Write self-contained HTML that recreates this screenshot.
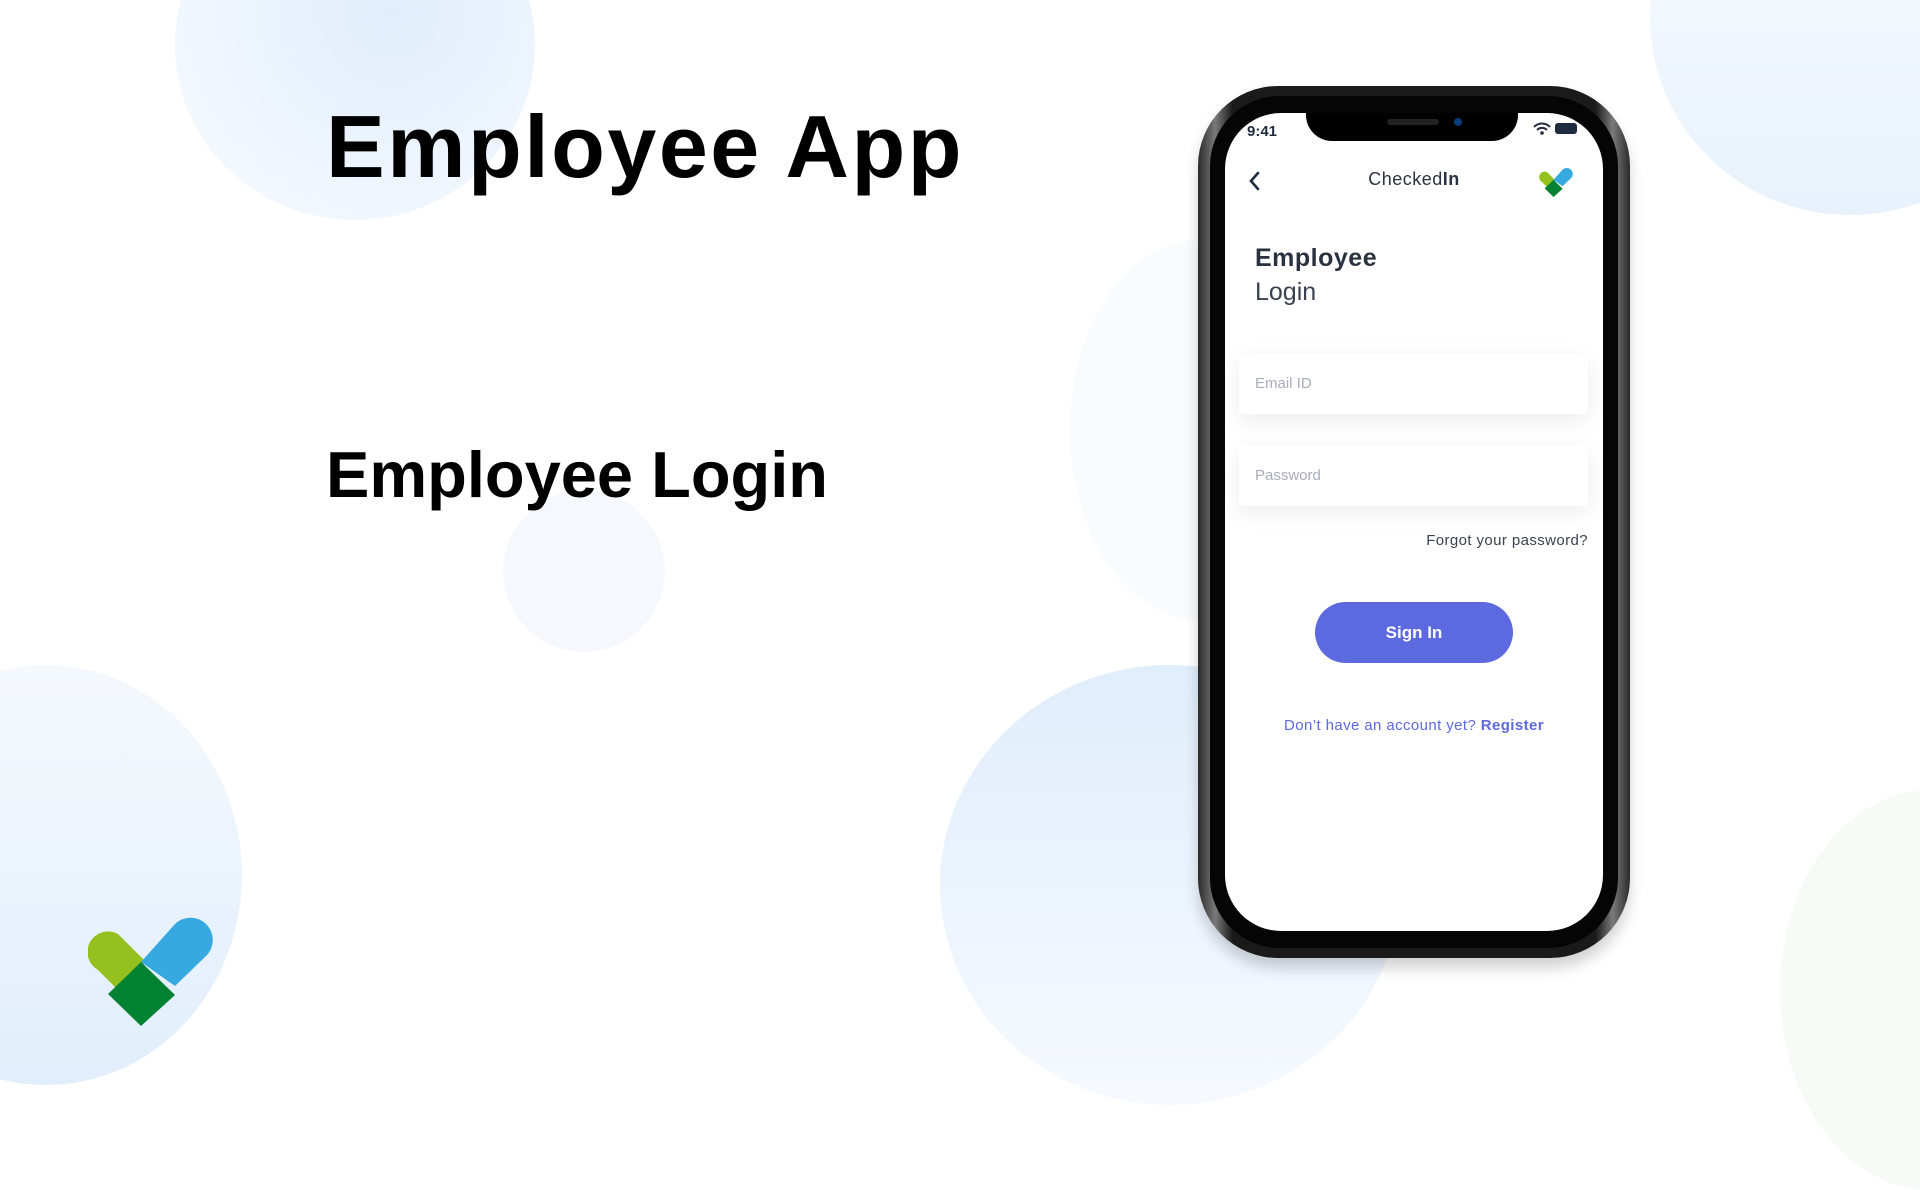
<!DOCTYPE html>
<html><head><meta charset="utf-8"><style>
*{margin:0;padding:0;box-sizing:border-box}
body{width:1920px;height:1080px;overflow:hidden;background:#fff;position:relative;font-family:"Liberation Sans",sans-serif}
.c{position:absolute;border-radius:50%}
.t{position:absolute;white-space:nowrap}
</style></head><body>
<div class="c" style="left:175px;top:-130px;width:360px;height:350px;background:radial-gradient(circle at 60% 40%,#e1edfb,#f1f7fe 70%,#fbfdff)"></div>
<div class="c" style="left:-150px;top:665px;width:392px;height:420px;background:linear-gradient(180deg,#f5f9fd,#e1eefb)"></div>
<div class="c" style="left:503px;top:490px;width:162px;height:162px;background:#f5f9fe"></div>
<div class="c" style="left:940px;top:665px;width:460px;height:440px;background:linear-gradient(180deg,#e0edfb,#f6faff)"></div>
<div class="c" style="left:1070px;top:240px;width:260px;height:380px;background:#fafbfc"></div>
<div class="c" style="left:1650px;top:-180px;width:400px;height:395px;background:linear-gradient(180deg,#f9fcfe,#e8f2fc)"></div>
<div class="c" style="left:1780px;top:790px;width:300px;height:400px;background:#f7fbf8"></div>

<div class="t" style="left:326px;top:96px;font-size:88px;font-weight:bold;color:#000;letter-spacing:2.5px">Employee App</div>
<div class="t" style="left:326px;top:437px;font-size:65px;font-weight:bold;color:#000">Employee Login</div>

<svg style="position:absolute;left:88px;top:914px" width="132" height="112" viewBox="0 0 132 112">
<path d="M30 20 L58 48 L30 76 L10 56 A20 20 0 0 1 30 20Z" fill="#95c11f"/>
<path d="M87 10 A22 22 0 0 1 118 42 L87 72 L53 48Z" fill="#36a9e1"/>
<path d="M53 48 L87 81 L53 112 L20 80Z" fill="#008232"/>
</svg>

<div style="position:absolute;left:1198px;top:86px;width:432px;height:872px;border-radius:80px;background:linear-gradient(90deg,#2a2a2a,#7a7a7a 4%,#1a1a1a 8%,#1a1a1a 92%,#7a7a7a 96%,#2a2a2a);box-shadow:0 10px 14px rgba(0,0,0,.18)"></div>
<div style="position:absolute;left:1210px;top:96px;width:408px;height:852px;border-radius:70px;background:#050505"></div>
<div style="position:absolute;left:1225px;top:113px;width:378px;height:818px;border-radius:56px;background:#fff;overflow:hidden">
 <div style="position:absolute;left:81px;top:-4px;width:212px;height:32px;background:#000;border-radius:0 0 26px 26px"></div>
 <div style="position:absolute;left:162px;top:6px;width:52px;height:6px;border-radius:3px;background:#222"></div>
 <div style="position:absolute;left:229px;top:5px;width:8px;height:8px;border-radius:50%;background:#0a3b7a"></div>
 <div class="t" style="left:22px;top:10px;font-size:15px;font-weight:bold;color:#1f2b3e">9:41</div>
 <svg style="position:absolute;left:308px;top:9px" width="18" height="13" viewBox="0 0 18 13"><path d="M1 5 A11 11 0 0 1 17 5 M4 8 A7 7 0 0 1 14 8" stroke="#1f2b3e" stroke-width="2" fill="none"/><circle cx="9" cy="11" r="1.8" fill="#1f2b3e"/></svg>
 <div style="position:absolute;left:330px;top:10px;width:22px;height:11px;border-radius:3px;background:#1f2b3e"></div>
 <svg style="position:absolute;left:22px;top:57px" width="14" height="22" viewBox="0 0 14 22"><path d="M11 3 L4 11 L11 19" stroke="#1f2b3e" stroke-width="2.6" fill="none" stroke-linecap="round"/></svg>
 <div class="t" style="left:0;width:378px;text-align:center;top:56px;font-size:18px;color:#2a3240;letter-spacing:.5px">Checked<b>In</b></div>
 <svg style="position:absolute;left:314px;top:54px" width="36" height="30" viewBox="0 0 132 112">
  <path d="M30 20 L58 48 L30 76 L10 56 A20 20 0 0 1 30 20Z" fill="#95c11f"/>
  <path d="M87 10 A22 22 0 0 1 118 42 L87 72 L53 48Z" fill="#36a9e1"/>
  <path d="M53 48 L87 81 L53 112 L20 80Z" fill="#008232"/></svg>
 <div class="t" style="left:30px;top:131px;font-size:25px;font-weight:bold;color:#2a3240;letter-spacing:.5px">Employee</div>
 <div class="t" style="left:30px;top:165px;font-size:25px;color:#3a4250">Login</div>
 <div style="position:absolute;left:14px;top:241px;width:349px;height:60px;background:#fff;border-radius:4px;box-shadow:0 6px 22px rgba(0,0,0,.08)"></div>
 <div class="t" style="left:30px;top:262px;font-size:15px;color:#a9adbb">Email ID</div>
 <div style="position:absolute;left:14px;top:332px;width:349px;height:61px;background:#fff;border-radius:4px;box-shadow:0 6px 22px rgba(0,0,0,.08)"></div>
 <div class="t" style="left:30px;top:354px;font-size:15px;color:#a9adbb">Password</div>
 <div class="t" style="right:15px;top:419px;font-size:15px;color:#3a4250;letter-spacing:.4px">Forgot your password?</div>
 <div style="position:absolute;left:90px;top:489px;width:198px;height:61px;border-radius:31px;background:#5d69de;color:#fff;font-size:17px;font-weight:bold;text-align:center;line-height:61px">Sign In</div>
 <div class="t" style="left:0;width:378px;text-align:center;top:604px;font-size:15px;color:#5d69de;letter-spacing:.4px">Don’t have an account yet? <b>Register</b></div>
</div>
</body></html>
